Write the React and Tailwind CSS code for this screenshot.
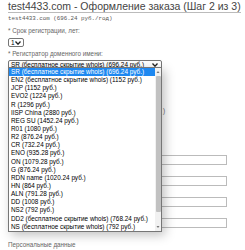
import React from "react";

const registrars = [
  "SR (бесплатное скрытие whois) (696.24 руб.)",
  "EN2 (бесплатное скрытие whois) (1152 руб.)",
  "JCP (1152 руб.)",
  "EVO2 (1224 руб.)",
  "R (1296 руб.)",
  "IISP China (2880 руб.)",
  "REG SU (1452.24 руб.)",
  "R01 (1080 руб.)",
  "R2 (876.24 руб.)",
  "CR (732.24 руб.)",
  "ENO (935.28 руб.)",
  "ON (1079.28 руб.)",
  "G (876.24 руб.)",
  "RDN name (1020.24 руб.)",
  "HN (864 руб.)",
  "ALN (791.28 руб.)",
  "DD (1008 руб.)",
  "NS2 (792 руб.)",
  "DD2 (бесплатное скрытие whois) (768.24 руб.)",
  "NS (бесплатное скрытие whois) (792 руб.)",
];

const Chevron = () => (
  <svg width="6" height="4" viewBox="0 0 6 4" className="shrink-0">
    <path d="M0.5 0.5 L3 3.2 L5.5 0.5" fill="none" stroke="#222" strokeWidth="1.3" />
  </svg>
);

// label row sits under the open list, so only the box is drawn
const Field = () => (
  <div className="pt-[11px]">
    <div className="h-[10px] w-[219px] border border-[#bbb] bg-white"></div>
  </div>
);

const App = () => {
  return (
    <div className="relative h-[250px] w-[245px] overflow-hidden bg-white font-['Liberation_Sans',Arial,sans-serif]">
      <div className="ml-2 w-[233px] whitespace-nowrap border-b border-[#bbb] pt-[1px] text-[10.5px] leading-[11px] text-[#444]">
        test4433.com - Оформление заказа (Шаг 2 из 3)
      </div>
      <div className="ml-2 mt-[2px] h-[7px] whitespace-nowrap font-['Liberation_Mono',monospace] text-[5.8px] leading-[7px] text-[#555]">
        test4433.com (696.24 руб./год)
      </div>

      <div className="ml-2 mt-[5px] h-[8px] text-[6.3px] leading-[8px] text-[#666]">* Срок регистрации, лет:</div>
      <div className="ml-2 mt-[3px] flex h-[9px] w-[16px] items-center justify-between rounded-[2px] border border-[#767676] px-[2px] text-[6.5px] leading-[7px] text-black">
        <span>1</span>
        <Chevron />
      </div>

      <div className="ml-2 mt-[2px] h-[10px] text-[6.3px] leading-[10px] text-[#666]">* Регистратор доменного имени:</div>
      <div className="ml-2 mt-[1px] flex h-[10px] w-[154px] items-center gap-[2px] overflow-hidden whitespace-nowrap rounded-[2px] border border-[#767676] pl-[2px] pr-[3px] text-[6.4px] leading-[8px] text-black">
        <span className="flex-1">SR (бесплатное скрытие whois) (696.24 руб.)</span>
        <Chevron />
      </div>

      <div className="ml-2">
        <div className="ml-[155px] mt-[37px] text-[6.3px] leading-[8px] text-[#666]">)</div>
        <div className="mt-[29px] flex flex-col">
          <Field />
          <Field />
          <Field />
          <Field />
        </div>
        <div className="mt-[13px] whitespace-nowrap text-[6.3px] leading-[8px] text-[#666]">Персональные данные</div>
      </div>

      <div className="absolute left-2 top-[67px] flex h-[165px] w-[154px] border border-[#767676] bg-white text-[6.4px] text-black shadow-[3px_3px_10px_rgba(0,0,0,0.25)]">
        <div className="flex-1">
          {registrars.map((r, i) => (
            <div
              key={r}
              className={
                i === 0
                  ? "h-[8.15px] whitespace-nowrap bg-[#1e88f0] pl-[2px] leading-[8.15px] text-white"
                  : "h-[8.15px] whitespace-nowrap pl-[2px] leading-[8.15px]"
              }
            >
              {r}
            </div>
          ))}
        </div>
        <div className="flex w-[6px] flex-col items-center bg-[#f1f1f1]">
          <svg width="4" height="8" viewBox="0 0 4 8">
            <path d="M0.5 5 L2 3 L3.5 5 Z" fill="#777" />
          </svg>
          <div className="mb-[11px] w-[5px] flex-1 rounded-[1px] bg-[#c1c1c1]"></div>
          <svg width="4" height="8" viewBox="0 0 4 8">
            <path d="M0.5 3 L2 5 L3.5 3 Z" fill="#777" />
          </svg>
        </div>
      </div>
    </div>
  );
};

export default App;
